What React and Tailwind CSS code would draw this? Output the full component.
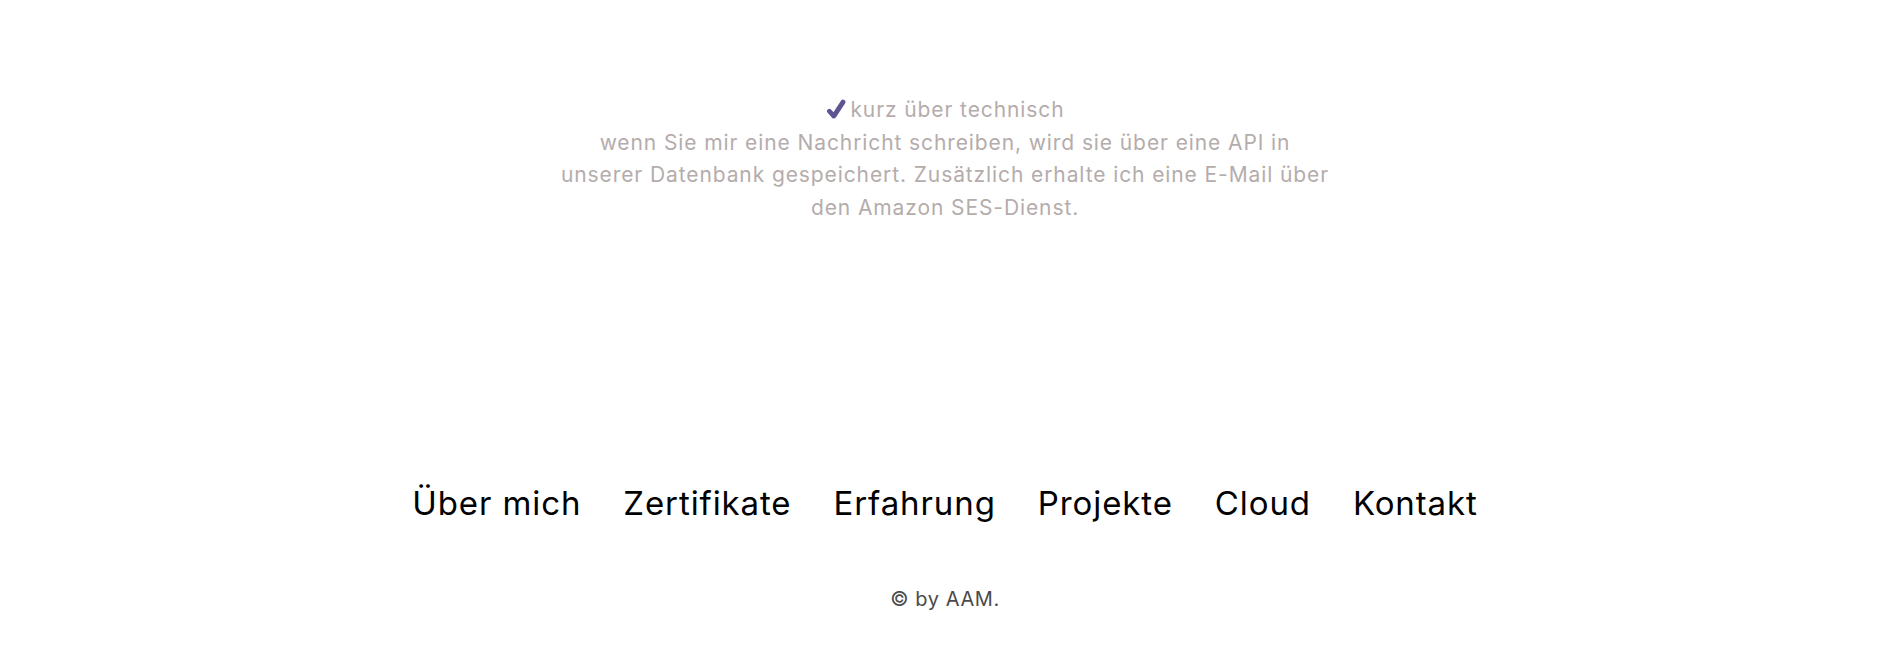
import React from "react";

const NAV = ["Über mich", "Zertifikate", "Erfahrung", "Projekte", "Cloud", "Kontakt"];

function Check() {
  return (
    <svg viewBox="0 0 24 24" className="w-[22px] h-[21px] inline-block mr-[3px] align-[-3px]">
      <path d="M4.5 14 L9.5 19.5 L20 3.5" fill="none" stroke="#5f5394" strokeWidth="5.5" strokeLinecap="round" strokeLinejoin="round" />
    </svg>
  );
}

export default function App() {
  return (
    <div className="min-h-[653px] bg-white flex flex-col items-center" style={{ fontFamily: "Inter, 'Noto Sans', sans-serif" }}>
      {/* technische Info */}
      <section className="pt-[94px] text-center text-[21px] leading-[32.5px] tracking-[0.9px] text-[#b5acac]">
        <p><Check />kurz über technisch</p>
        <p>
          wenn Sie mir eine Nachricht schreiben, wird sie über eine API in<br />
          unserer Datenbank gespeichert. Zusätzlich erhalte ich eine E-Mail über<br />
          den Amazon SES-Dienst.
        </p>
      </section>

      {/* Footer */}
      <footer className="mt-[259px] flex flex-col items-center">
        <nav className="flex gap-[42px] text-[33px] leading-[40px] tracking-[0.9px] text-black">
          {NAV.map(n => (
            <a key={n} href="#" className="no-underline">{n}</a>
          ))}
        </nav>
        <p className="mt-[61px] text-[20px] tracking-[0.6px] text-[#4a4a4a]">© by AAM.</p>
      </footer>
    </div>
  );
}
